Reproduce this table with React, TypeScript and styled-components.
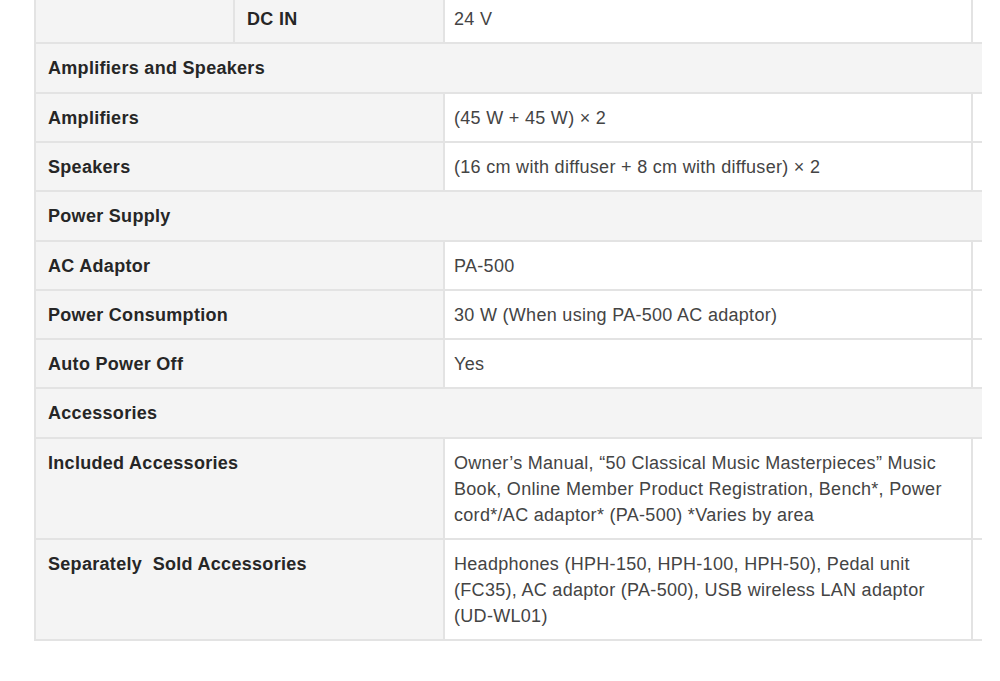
import styled, { createGlobalStyle } from "styled-components"

const Global = createGlobalStyle`
    html, body {
        margin: 0;
        padding: 0;
        background: #fff;
    }
    body {
        font-family: "Liberation Sans", Arial, sans-serif;
        overflow: hidden;
    }
`

const Page = styled.div`
    padding-left: 34px;
    margin-top: -5px;
`

const Table = styled.table`
    width: 947px;
    border-collapse: collapse;
    table-layout: fixed;
    font-size: 18px;
    letter-spacing: 0.3px;
    line-height: 26px;
`

const Cell = styled.td`
    height: 26px;
    padding: 11px 12px 10px 12px;
    border-bottom: 2px solid #e3e3e3;
    border-left: 2px solid #e3e3e3;
    vertical-align: top;
    background: #f4f4f4;
    color: #262626;
    font-weight: bold;
`

const Head = styled(Cell)`
    padding: 11px 12px 11px 12px;
`

const Value = styled.td`
    padding: 11px 14px 10px 9px;
    border-bottom: 2px solid #e3e3e3;
    border-left: 2px solid #e3e3e3;
    vertical-align: top;
    background: #fff;
    color: #444;
`

const Spacer = styled.td`
    border-bottom: 2px solid #e3e3e3;
    border-left: 2px solid #e3e3e3;
    background: #fff;
    padding: 0;
`

type Row = { head?: string; label?: string; value?: string }

const rows: Row[] = [
    { head: 'Amplifiers and Speakers' },
    { label: 'Amplifiers', value: '(45 W + 45 W) × 2' },
    { label: 'Speakers', value: '(16 cm with diffuser + 8 cm with diffuser) × 2' },
    { head: 'Power Supply' },
    { label: 'AC Adaptor', value: 'PA-500' },
    { label: 'Power Consumption', value: '30 W (When using PA-500 AC adaptor)' },
    { label: 'Auto Power Off', value: 'Yes' },
    { head: 'Accessories' },
    {
        label: 'Included Accessories',
        value: 'Owner’s Manual, “50 Classical Music Masterpieces” Music Book, Online Member Product Registration, Bench*, Power cord*/AC adaptor* (PA-500) *Varies by area'
    },
    {
        label: 'Separately\u00a0 Sold Accessories',
        value: 'Headphones (HPH-150, HPH-100, HPH-50), Pedal unit (FC35), AC adaptor (PA-500), USB wireless LAN adaptor (UD-WL01)'
    },
]

export default function App() {
    return (
        <Page>
            <Global />
            <Table>
                <colgroup>
                    <col style={{ width: 199 }} />
                    <col style={{ width: 210 }} />
                    <col style={{ width: 528 }} />
                    <col style={{ width: 10 }} />
                </colgroup>
                <tbody>
                    <tr>
                        <Cell></Cell>
                        <Cell>DC IN</Cell>
                        <Value>24 V</Value>
                        <Spacer />
                    </tr>
                    {rows.map((r, i) =>
                        r.head ? (
                            <tr key={i}>
                                <Head colSpan={4}>{r.head}</Head>
                            </tr>
                        ) : (
                            <tr key={i}>
                                <Cell colSpan={2}>{r.label}</Cell>
                                <Value>{r.value}</Value>
                                <Spacer />
                            </tr>
                        )
                    )}
                </tbody>
            </Table>
        </Page>
    )
}
